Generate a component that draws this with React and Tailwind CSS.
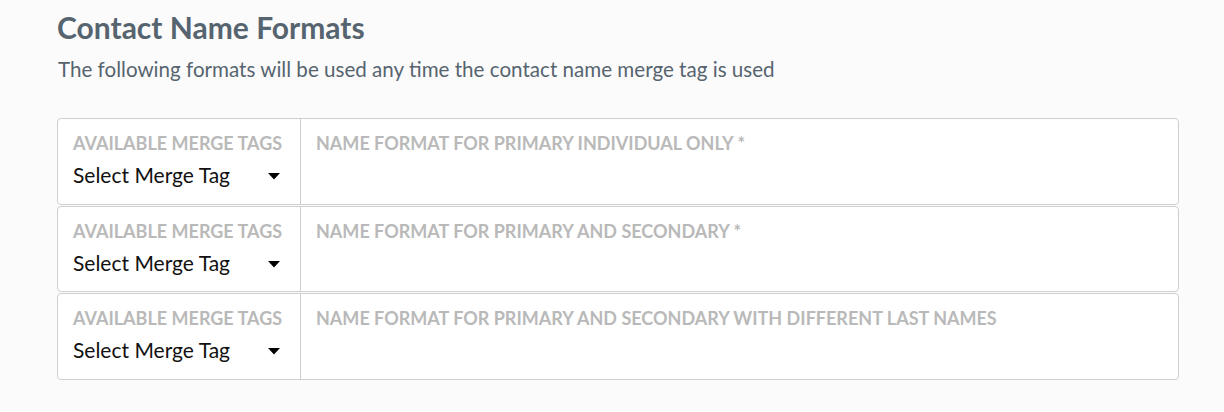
import React from "react";

const rows = [
  "NAME FORMAT FOR PRIMARY INDIVIDUAL ONLY *",
  "NAME FORMAT FOR PRIMARY AND SECONDARY *",
  "NAME FORMAT FOR PRIMARY AND SECONDARY WITH DIFFERENT LAST NAMES",
];

export default function App() {
  return (
    <div className="w-[1224px] h-[412px] bg-[#fbfbfb] pl-[57px] pr-[45px] pt-[9px]" style={{ fontFamily: "Lato, 'Open Sans', sans-serif" }}>
      <h1 className="text-[30px] font-bold text-[#56646f] leading-[36px] m-0">Contact Name Formats</h1>
      <p className="text-[20.6px] text-[#56646f] leading-[26px] mt-[11px] ml-[1px]">
        The following formats will be used any time the contact name merge tag is used
      </p>
      <div className="mt-[36px] flex flex-col gap-[1px]">
        {rows.map((r) => (
          <div key={r} className="flex h-[86.5px] border border-[#cfcfcf] rounded-[4px] bg-white">
            <div className="w-[243px] border-r border-[#cfcfcf] pl-[15px] pt-[13px]">
              <div className="text-[18px] font-bold text-[#b9b9b9] leading-[22px] whitespace-nowrap">AVAILABLE MERGE TAGS</div>
              <div className="flex items-center justify-between pr-[20px] mt-[8px]">
                <span className="text-[21px] text-[#111] leading-[26px]">Select Merge Tag</span>
                <svg width="12" height="7" viewBox="0 0 12 7" className="mt-[3px]">
                  <path d="M0 0 H12 L6 6.5 Z" fill="#000" />
                </svg>
              </div>
            </div>
            <div className="flex-1 pl-[15px] pt-[13px]">
              <div className="text-[18px] font-bold text-[#b9b9b9] leading-[22px]">{r}</div>
            </div>
          </div>
        ))}
      </div>
    </div>
  );
}
